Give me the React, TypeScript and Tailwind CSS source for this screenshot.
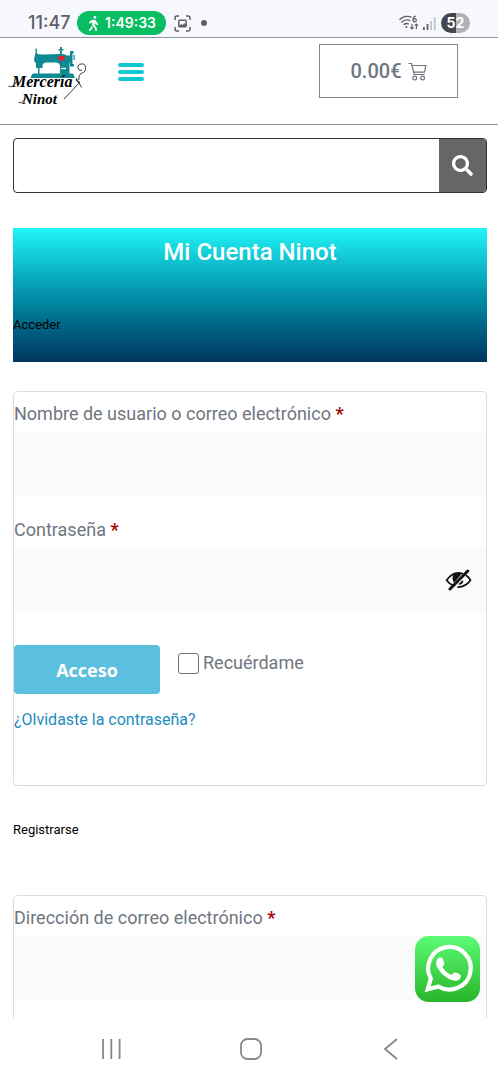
import React, { useState } from 'react'
import { FaSearch, FaWalking } from 'react-icons/fa'

const StatusBar: React.FC = () => (
  <div className="flex h-[38px] shrink-0 items-center border-b border-[#8e939d] bg-[#f7f7fe] pt-[9px] pr-7 pl-7 font-['Inter',sans-serif] text-[#5f6066]">
    <span className="w-[49px] text-lg leading-6 font-medium">11:47</span>
    <span className="flex h-6 w-[89px] items-center gap-1 rounded-full bg-[#07be62] pl-[9px] text-sm font-semibold text-white">
      <FaWalking size={15} />
      1:49:33
    </span>
    <svg className="ml-2 h-[17px] w-[17px]" viewBox="0 0 17 17" fill="none" stroke="currentColor" strokeWidth="1.5">
      <path d="M1 5V3a2 2 0 0 1 2-2h2M12 1h2a2 2 0 0 1 2 2v2M16 12v2a2 2 0 0 1-2 2h-2M5 16H3a2 2 0 0 1-2-2v-2" />
      <rect x="4.8" y="5.2" width="7.4" height="6.6" rx="1" />
      <path d="M5 11l2.2-2 1.6 1 1.7-2 1.7 2v1.8H5z" fill="currentColor" stroke="none" />
    </svg>
    <span className="ml-[10px] h-[6px] w-[6px] rounded-full bg-[#5f6066]" />
    <svg className="ml-auto h-4 w-5" viewBox="0 0 20 16" fill="none" stroke="currentColor" strokeWidth="1.4">
      <path d="M.5 4.8C4 1 9 .7 12.5 2.2M2.3 7.4c2.7-2.6 6-3 8.9-1.8M4.6 9.8c1.9-1.5 3.8-1.4 5.2-.7" />
      <circle cx="7.4" cy="12" r="1" fill="currentColor" stroke="none" />
      <path d="M16.8 1.2c-2 .4-2.9 2-2.7 3.9" strokeWidth="1.2" />
      <circle cx="15.7" cy="5.3" r="1.6" strokeWidth="1.2" />
      <path d="M13 9v5M11.4 12.4L13 14l1.6-1.6M17.4 14V9M15.8 10.6L17.4 9l1.6 1.6" strokeWidth="1.2" />
    </svg>
    <svg className="ml-1 h-[13px] w-[13px]" viewBox="0 0 13 13" fill="currentColor">
      <rect x="0" y="10" width="1.8" height="3" />
      <rect x="3.6" y="7" width="1.8" height="6" />
      <rect x="7.2" y="4" width="1.8" height="9" opacity=".35" />
      <rect x="10.8" y="0" width="1.8" height="13" opacity=".35" />
    </svg>
    <span className="ml-[5px] flex h-5 w-[29px] items-center justify-center rounded-full bg-linear-to-r from-[#45464c] from-50% to-[#b0b0b6] to-50% text-sm font-bold text-white">
      52
    </span>
  </div>
)

const Logo: React.FC = () => (
  <svg className="h-[60px] w-20" viewBox="0 0 80 60" role="img" aria-label="Mercería Ninot">
    <g fill="#108a92">
      <path d="M27.500 7q4 2 9 1.500l14-.5q5-.8 8.500 1.500h5v7h-2.500V29H52v-9q-.500-3.500-4-3.500H38.500q-3.500 0-4 3V22H28v-5q-2-1-2-4z" />
      <path d="M24.500 27.500h40.500l2 4.500H22.500z" />
      <path d="M27.500 2.500h1.400V8h-1.400zM52 1h1.800v8H52zM50.500 3h5v1.600h-5zM30 21h1.500v7H30z" />
      <path d="M62 5h3.500v2.500h-1V18h1.500v2.500h-4zM65.500 9h1.200v5h-1.200z" />
    </g>
    <path d="M53.500 15.500l-3.200-3q-1-2 .8-2.700 1.600-.3 2.400 1 .8-1.300 2.300-1 1.900.7.9 2.700z" fill="#ef1d28" />
    <path d="M53 22.500h5" stroke="#fff" strokeWidth="1.300" />
    <g fill="#000" fontFamily="'Liberation Serif', serif" fontStyle="italic" fontWeight="700">
      <text x="4" y="41" fontSize="16">Mercería</text>
      <text x="14" y="58" fontSize="15">Ninot</text>
    </g>
    <g fill="none" stroke="#222" strokeWidth=".9">
      <path d="M.500 40q4 2.500 8.500-5M10.500 56.500q4 1.500 7.500-5" />
      <path d="M56 53L72 36q-5 0-3.500-3.500l5 9M71 34q-1-5 3-7 4-1 3.500-5.500t-4-3.500q-4 0-3.500 3.500t4 3" />
    </g>
  </svg>
)

const CartIcon: React.FC = () => (
  <svg className="h-[19px] w-[19px]" viewBox="0 0 19 19" fill="none" stroke="currentColor" strokeWidth="1.200">
    <path d="M.5 1.500h3l2.700 11h10.500M4 3.500h13.800l-1.200 6.700H5.700" />
    <circle cx="6.700" cy="16" r="1.900" />
    <circle cx="14.600" cy="16" r="1.900" />
  </svg>
)

const EyeOffIcon: React.FC = () => (
  <svg className="h-[22px] w-[27px]" viewBox="0 0 27 22" fill="none" stroke="#111" strokeWidth="1.700" strokeLinecap="round">
    <path d="M8.500 16.600Q4 14.700 1.600 11.200 6.500 4 13.500 3.800q2 0 3.800.7M21.300 6.500q2.600 1.700 4.200 4.700-4.500 6.500-12.500 7M17.500 12.500q-1 2-3 2.500" />
    <path d="M8.300 5.500Q11 3.600 17 4.500l-8 9.300q-2.500-3.600-.7-8.300z" fill="#111" stroke="none" />
    <path d="M5 20L22.800 2" strokeWidth="3" />
  </svg>
)

const WhatsAppIcon: React.FC = () => (
  <svg className="h-[66px] w-[66px]" viewBox="0 0 66 66">
    <defs>
      <linearGradient id="wa" x1="0" y1="0" x2="0" y2="1">
        <stop offset="0" stopColor="#5cfb76" />
        <stop offset="1" stopColor="#29b529" />
      </linearGradient>
    </defs>
    <rect width="65" height="66" rx="14" fill="url(#wa)" />
    <path
      d="M12.700 53.300l3.100-10.800a21.300 21.300 0 1 1 7.700 8z"
      fill="none"
      stroke="#fff"
      strokeWidth="4.200"
    />
    <path
      d="M23.500 22c1.100-1 3.100-1 3.900.2.900 1.800 1.600 3.500 2 5.200.2 1.500-2 2.700-1.900 3.600 2 3.600 4.900 6.200 8.700 7.800 1.200.2 2.500-2.800 4-2.600 1.900.6 3.600 1.500 5.200 2.500 1.400 1.400-.3 4.500-2 5.300-2.600 1.200-5.600.7-8.700-.7-5.300-2.500-9.200-6.200-12.100-11.200-1.900-3.600-2.200-7.500.9-10.100z"
      fill="#fff"
    />
  </svg>
)

interface FieldProps {
  id: string
  label: string
  type: string
}

const Field: React.FC<FieldProps & { children?: React.ReactNode }> = ({ id, label, type, children }) => (
  <div>
    <label htmlFor={id} className="block text-lg leading-7">
      {label} <span className="font-bold text-[#a60a0a]">*</span>
    </label>
    <div className="mt-1 flex h-16 items-center bg-[#f9fafa] pr-[14px]">
      <input id={id} type={type} className="h-full min-w-0 flex-1 px-4 text-lg outline-none" />
      {children}
    </div>
  </div>
)

const NavBar: React.FC = () => (
  <nav className="flex h-[62px] shrink-0 items-center justify-between bg-white pr-[95px] pl-[99px] text-[#88888c]">
    <button type="button" aria-label="Recientes">
      <svg className="h-6 w-6" viewBox="0 0 24 24" fill="none" stroke="currentColor" strokeWidth="1.800">
        <path d="M4 2v20M12.300 2v20M20.600 2v20" />
      </svg>
    </button>
    <button type="button" aria-label="Inicio">
      <svg className="h-6 w-6" viewBox="0 0 24 24" fill="none" stroke="currentColor" strokeWidth="1.800">
        <rect x="2" y="2" width="20" height="20" rx="6.500" />
      </svg>
    </button>
    <button type="button" aria-label="Atrás">
      <svg className="h-6 w-6" viewBox="0 0 24 24" fill="none" stroke="currentColor" strokeWidth="1.800">
        <path d="M18 2L6 12l12 10" />
      </svg>
    </button>
  </nav>
)

export default function App() {
  const [showPassword, setShowPassword] = useState(false)

  return (
    <div className="flex h-screen flex-col overflow-hidden bg-white font-['Roboto',sans-serif] text-[#707680]">
      <StatusBar />
      <div className="relative min-h-0 flex-1 overflow-hidden">
        <header className="flex h-[87px] items-start border-b border-[#8e9a9d] pr-10 pl-2">
          <a href="#inicio" className="mt-2">
            <Logo />
          </a>
          <button type="button" aria-label="Menú" className="mt-[25px] ml-[30px] flex w-[26px] flex-col gap-[3px]">
            <span className="h-1 rounded-full bg-[#14c8cf]" />
            <span className="h-1 rounded-full bg-[#14c8cf]" />
            <span className="h-1 rounded-full bg-[#14c8cf]" />
          </button>
          <a
            href="#carrito"
            className="mt-[6px] ml-auto flex h-[54px] w-[139px] items-center justify-center gap-[6px] border border-[#85888c] text-xl font-medium"
          >
            0.00€
            <CartIcon />
          </a>
        </header>

        <main className="pt-[13px] pr-[11px] pl-[13px]">
          <form className="flex h-[55px] overflow-hidden rounded border border-[#333]">
            <input type="search" aria-label="Buscar" className="min-w-0 flex-1 px-4 outline-none" />
            <button type="button" aria-label="Buscar" className="flex w-[47px] items-center justify-center bg-[#666] text-white">
              <FaSearch size={21} />
            </button>
          </form>

          <section className="mt-[35px] h-[134px] bg-linear-to-b from-[#20f6f8] to-[#00365e]">
            <h1 className="pt-2 text-center text-2xl leading-8 font-medium text-white">Mi Cuenta Ninot</h1>
            <h2 className="mt-[47px] text-[13px] leading-5 text-black">Acceder</h2>
          </section>

          <form className="mt-[29px] rounded border border-[#dcdce0] pt-2 pb-[51px]">
            <Field id="username" label="Nombre de usuario o correo electrónico" type="text" />
            <div className="mt-5">
              <Field id="password" label="Contraseña" type={showPassword ? 'text' : 'password'}>
                <button type="button" aria-label="Mostrar contraseña" onClick={() => setShowPassword(!showPassword)}>
                  <EyeOffIcon />
                </button>
              </Field>
            </div>
            <div className="mt-[33px] flex items-start gap-[18px]">
              <button
                type="button"
                className="h-[49px] w-[146px] rounded bg-[#5bc0de] font-['Open_Sans',sans-serif] text-lg font-bold text-white"
              >
                Acceso
              </button>
              <label className="flex items-center gap-1 pt-1 text-lg leading-7">
                <input type="checkbox" className="h-[21px] w-[21px] appearance-none rounded-[3px] border border-[#707074]" />
                Recuérdame
              </label>
            </div>
            <a href="#recuperar" className="mt-3 block text-base leading-7 text-[#1e8cbe]">
              ¿Olvidaste la contraseña?
            </a>
          </form>

          <h2 className="mt-[34px] text-[13px] leading-5 text-black">Registrarse</h2>

          <form className="mt-[55px] h-[395px] rounded border border-[#dcdce0] pt-2">
            <Field id="email" label="Dirección de correo electrónico" type="email" />
          </form>
        </main>

        <a href="#whatsapp" aria-label="WhatsApp" className="absolute right-[17px] bottom-4">
          <WhatsAppIcon />
        </a>
      </div>
      <NavBar />
    </div>
  )
}
